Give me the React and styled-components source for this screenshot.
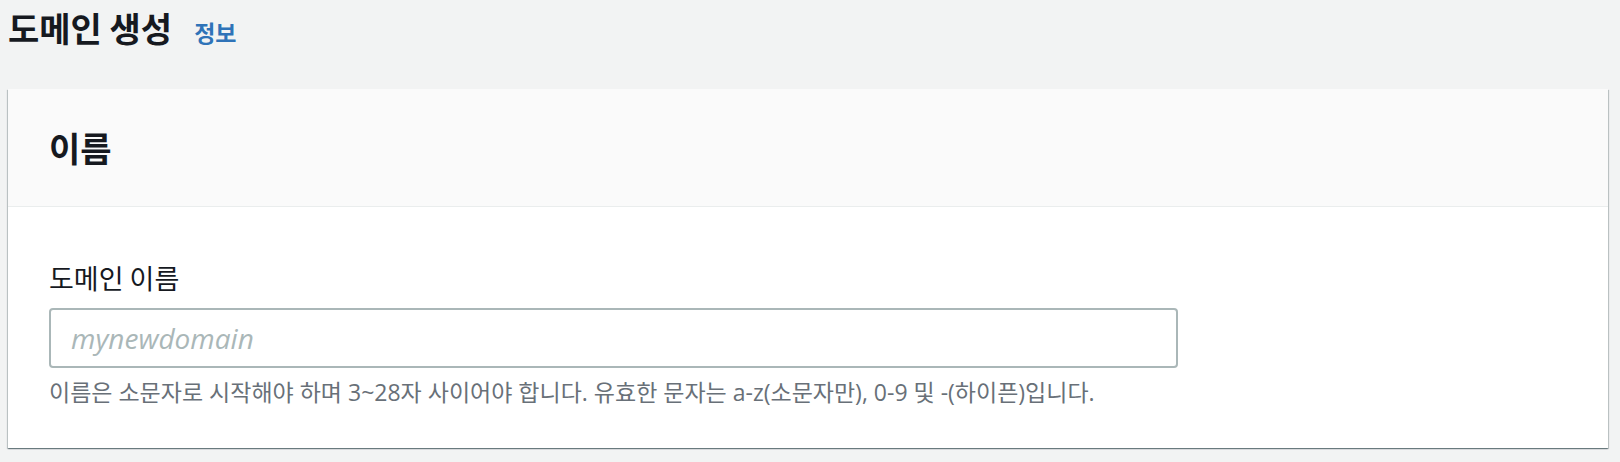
import React from 'react';
import styled, { createGlobalStyle } from 'styled-components';

const GlobalStyle = createGlobalStyle`
    html, body {
        margin: 0;
        padding: 0;
        background: #f2f3f3;
    }
    body {
        font-family: "Open Sans", "Noto Sans CJK KR", sans-serif;
        color: #16191f;
    }
`;

const Page = styled.div`
    width: 1620px;
    height: 462px;
    padding: 8px 12px 0 8px;
    box-sizing: border-box;
`;

const TitleRow = styled.div`
    display: flex;
    align-items: baseline;
    gap: 22px;
    height: 40px;
    margin-bottom: 41px;
`;

const Title = styled.h1`
    margin: 0;
    font-family: "Noto Sans CJK KR", sans-serif;
    font-size: 34px;
    line-height: 40px;
    font-weight: 700;
    color: #16191f;
`;

const InfoLink = styled.a`
    font-family: "Noto Sans CJK KR", sans-serif;
    font-size: 23px;
    font-weight: 700;
    color: #2f73b8;
    text-decoration: none;
    cursor: pointer;
`;

const Card = styled.section`
    background: #ffffff;
    box-shadow: 0 1px 1px 0 rgba(0, 28, 36, 0.35),
        1px 1px 1px 0 rgba(0, 28, 36, 0.18),
        -1px 1px 1px 0 rgba(0, 28, 36, 0.18);
`;

const CardHeader = styled.div`
    display: flex;
    align-items: center;
    height: 117px;
    padding: 0 41px;
    background: #fafafa;
    border-bottom: 1px solid #eaeded;
`;

const CardTitle = styled.h2`
    margin: 0;
    font-family: "Noto Sans CJK KR", sans-serif;
    font-size: 34px;
    font-weight: 700;
    color: #16191f;
`;

const CardBody = styled.div`
    padding: 55px 41px 41px;
`;

const Field = styled.div`
    display: flex;
    flex-direction: column;
    width: 1129px;
`;

const Label = styled.label`
    font-family: "Noto Sans CJK KR", sans-serif;
    font-size: 27px;
    line-height: 32px;
    color: #16191f;
`;

const TextInput = styled.input`
    margin-top: 14px;
    height: 60px;
    box-sizing: border-box;
    padding: 0 20px;
    border: 2px solid #aab7b8;
    border-radius: 4px;
    background: #ffffff;
    font-family: "Open Sans", sans-serif;
    font-size: 28px;
    color: #16191f;
    outline: none;

    &::placeholder {
        color: #aab7b8;
        font-style: italic;
    }
`;

const Hint = styled.div`
    margin-top: 9px;
    font-family: "Open Sans", "Noto Sans CJK KR", sans-serif;
    font-size: 23px;
    line-height: 30px;
    color: #687078;
    white-space: nowrap;
`;

export default function App() {
    return (
        <>
            <GlobalStyle />
            <Page>
                <TitleRow>
                    <Title>도메인 생성</Title>
                    <InfoLink>정보</InfoLink>
                </TitleRow>
                <Card>
                    <CardHeader>
                        <CardTitle>이름</CardTitle>
                    </CardHeader>
                    <CardBody>
                        <Field>
                            <Label htmlFor="domain-name">도메인 이름</Label>
                            <TextInput id="domain-name" type="text" placeholder="mynewdomain" />
                            <Hint>
                                이름은 소문자로 시작해야 하며 3~28자 사이어야 합니다. 유효한 문자는 a-z(소문자만), 0-9 및 -(하이픈)입니다.
                            </Hint>
                        </Field>
                    </CardBody>
                </Card>
            </Page>
        </>
    );
}
